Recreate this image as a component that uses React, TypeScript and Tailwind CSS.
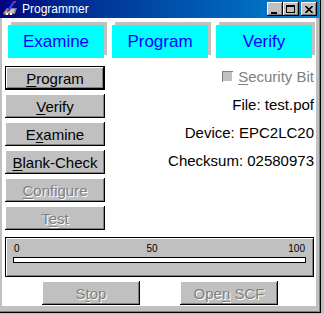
import React from "react";

const raised =
  "bg-[#c0c0c0] shadow-[inset_-1px_-1px_0_#000,inset_1px_1px_0_#fff,inset_-2px_-2px_0_#808080]";

function Mn({ pre, u, post }: { pre?: string; u: string; post?: string }) {
  return (
    <span className="whitespace-pre">
      {pre}
      <span className="underline underline-offset-2 decoration-1">{u}</span>
      {post}
    </span>
  );
}

function Btn({
  children,
  disabled,
  main,
  className = "",
}: {
  children: React.ReactNode;
  disabled?: boolean;
  main?: boolean;
  className?: string;
}) {
  return (
    <div className={`${main ? "border border-black" : ""} ${className}`}>
      <div
        className={`${raised} w-full h-full flex items-center justify-center text-[15px] leading-none ${
          disabled ? "text-[#808080] [text-shadow:1px_1px_0_#fff]" : "text-black"
        }`}
      >
        {children}
      </div>
    </div>
  );
}

function Tab({ label }: { label: string }) {
  return (
    <div className="w-[96px] h-[33px] bg-[#00ffff] shadow-[3px_-3px_0_#c0c0c0] flex items-center justify-center text-[17px] text-[#0000ff]">
      {label}
    </div>
  );
}

function TitleBtn({ children }: { children: React.ReactNode }) {
  return (
    <div className={`${raised} w-[16px] h-[14px] flex items-center justify-center`}>
      {children}
    </div>
  );
}

export default function App() {
  return (
    <div
      className="w-[324px] h-[314px] bg-[#c0c0c0] overflow-hidden"
      style={{ fontFamily: '"Liberation Sans", Arial, sans-serif' }}
    >
      <div className="w-[321px] h-[313px] flex flex-col bg-[#c0c0c0] shadow-[inset_-1px_-1px_0_#000,inset_-2px_-2px_0_#808080]">
        {/* title bar */}
        <div className="h-[18px] w-[319px] flex items-center bg-gradient-to-r from-[#000080] to-[#1084d0] pl-[2px] pr-[2px]">
          <svg width="18" height="16" viewBox="0 0 18 16" className="shrink-0">
            <path d="M1 12 L5 7 L15 7 L13 13 L2 14 Z" fill="#808080" />
            <path d="M3 11 L6 8 L13 8 L12 12 L3 12 Z" fill="#c0c0c0" />
            <rect x="4" y="12" width="2" height="2" fill="#fff" />
            <rect x="8" y="12" width="2" height="2" fill="#fff" />
            <path d="M6 10 L12 1" stroke="#2040ff" strokeWidth="2.5" />
            <path d="M12 1 L14 0" stroke="#ff2020" strokeWidth="2" />
            <path d="M5 11 L7 9" stroke="#ff2020" strokeWidth="1.5" />
          </svg>
          <span className="ml-[2px] text-white text-[12px] leading-none">Programmer</span>
          <div className="ml-auto flex items-center">
            <TitleBtn>
              <div className="w-[6px] h-[2px] bg-black mt-[7px] mr-[2px]" />
            </TitleBtn>
            <TitleBtn>
              <div className="w-[9px] h-[8px] border border-black border-t-2 mr-[1px]" />
            </TitleBtn>
            <div className="w-[2px]" />
            <TitleBtn>
              <svg width="8" height="7" viewBox="0 0 8 7" className="mr-[1px]">
                <path d="M0.5 0 L7.5 7 M7.5 0 L0.5 7" stroke="#000" strokeWidth="1.6" />
              </svg>
            </TitleBtn>
          </div>
        </div>

        {/* client */}
        <div className="ml-[2px] w-[314px] h-[288px] bg-white flex flex-col">
          <div className="mt-[7px] ml-[6px] flex gap-[8px]">
            <Tab label="Examine" />
            <Tab label="Program" />
            <Tab label="Verify" />
          </div>

          <div className="mt-[8px] flex">
            <div className="ml-[3px] w-[100px] flex flex-col gap-[4px]">
              <Btn main className="h-[24px]">
                <Mn u="P" post="rogram" />
              </Btn>
              <Btn className="h-[24px]">
                <Mn u="V" post="erify" />
              </Btn>
              <Btn className="h-[24px]">
                <Mn pre="E" u="x" post="amine" />
              </Btn>
              <Btn className="h-[24px]">
                <Mn u="B" post="lank-Check" />
              </Btn>
              <Btn disabled className="h-[24px]">
                <Mn u="C" post="onfigure" />
              </Btn>
              <Btn disabled className="h-[24px]">
                <Mn pre="T" u="e" post="st" />
              </Btn>
            </div>
            <div className="flex-1 pr-[2px] -mt-[2px] flex flex-col items-end gap-[4px] text-[15px] leading-none">
              <div className="h-[24px] flex items-center text-[#808080]">
                <div className="w-[11px] h-[11px] bg-[#c0c0c0] mr-[5px] shadow-[inset_1px_1px_0_#808080,inset_-1px_-1px_0_#fff]" />
                <Mn u="S" post="ecurity Bit" />
              </div>
              <div className="h-[24px] flex items-center">File: test.pof</div>
              <div className="h-[24px] flex items-center">Device: EPC2LC20</div>
              <div className="h-[24px] flex items-center">Checksum: 02580973</div>
            </div>
          </div>

          {/* progress group */}
          <div className="mt-[7px] ml-[3px] w-[309px] h-[40px] border border-black">
            <div className="w-full h-full bg-[#c0c0c0] shadow-[inset_1px_1px_0_#fff,inset_-1px_-1px_0_#808080] px-[7px] pt-[6px]">
              <div className="flex justify-between text-[10px] leading-none text-black px-[1px]">
                <span>0</span>
                <span className="-ml-[4px]">50</span>
                <span>100</span>
              </div>
              <div className="mt-[3px] h-[6px] bg-white border border-black" />
            </div>
          </div>

          <div className="mt-[4px] flex">
            <Btn disabled className="ml-[40px] w-[98px] h-[24px]">
              <Mn pre="S" u="t" post="op" />
            </Btn>
            <Btn disabled className="ml-[40px] w-[98px] h-[24px]">
              <Mn pre="Ope" u="n" post=" SCF" />
            </Btn>
          </div>
        </div>
      </div>
    </div>
  );
}
